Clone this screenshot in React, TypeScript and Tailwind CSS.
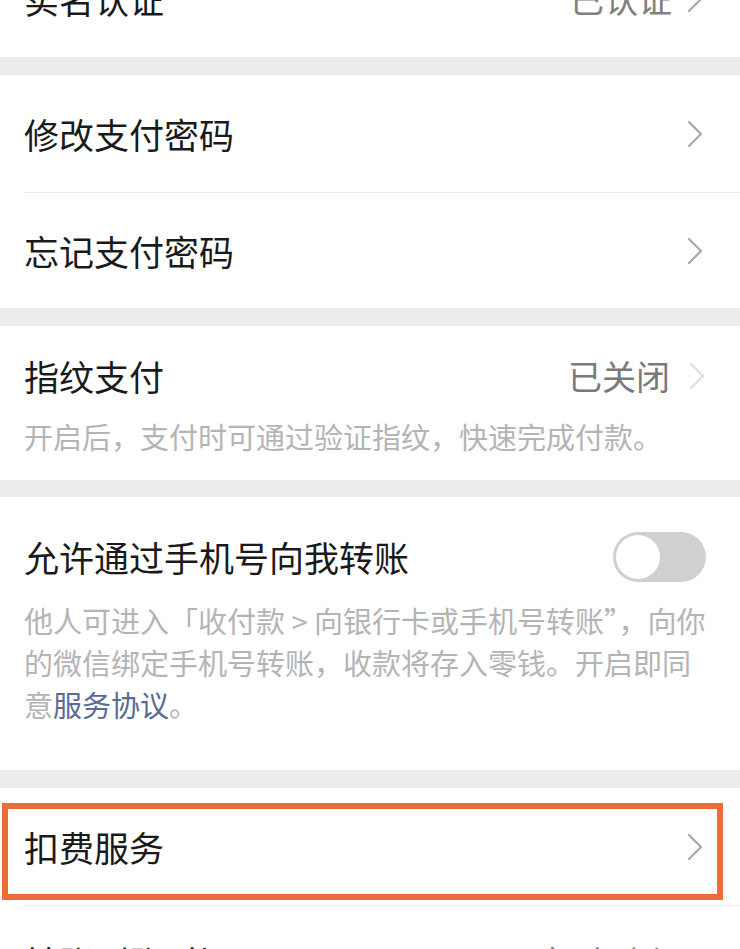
import React from 'react'

const Chevron = ({ light }: { light?: boolean }) => (
    <svg width="18" height="28" viewBox="0 0 18 28" className="shrink-0">
        <polyline
            points="3,2 15,14 3,26"
            fill="none"
            stroke={light ? '#dcdcdc' : '#a8a8a8'}
            strokeWidth="2.2"
            strokeLinecap="round"
            strokeLinejoin="round"
        />
    </svg>
)

const Gap = ({ h }: { h: string }) => <div className={`${h} bg-[#ededed]`} />

interface RowProps {
    title: string
    value?: string
}

const Row: React.FC<RowProps> = ({ title, value }) => (
    <div className="h-[117px] flex items-center justify-between pl-[24px] pr-[36px]">
        <span className="text-[35px] text-[#1a1a1a] leading-[48px]">{title}</span>
        <div className="flex items-center gap-[14px]">
            {value && <span className="text-[34px] text-[#808080] leading-[48px]">{value}</span>}
            <Chevron />
        </div>
    </div>
)

const Divider = () => <div className="ml-[24px] h-px bg-[#ececec]" />

export default function App() {
    return (
        <div className="w-[740px] h-[949px] overflow-hidden bg-white" style={{ fontFamily: '"Noto Sans CJK SC", "Noto Sans", sans-serif' }}>
            <div className="-mt-[60px]">
                <Row title="实名认证" value="已认证" />
            </div>
            <Gap h="h-[18px]" />

            <Row title="修改支付密码" />
            <Divider />
            <div className="h-[115px] flex items-center justify-between pl-[24px] pr-[36px]">
                <span className="text-[35px] text-[#1a1a1a] leading-[48px]">忘记支付密码</span>
                <Chevron />
            </div>
            <Gap h="h-[18px]" />

            <div className="h-[154px] pt-[26px] pl-[24px] pr-[34px]">
                <div className="flex items-center justify-between">
                    <span className="text-[35px] text-[#1a1a1a] leading-[48px]">指纹支付</span>
                    <div className="flex items-center gap-[18px]">
                        <span className="text-[34px] text-[#7a7a7a] leading-[48px]">已关闭</span>
                        <Chevron light />
                    </div>
                </div>
                <div className="mt-[15px] text-[29px] leading-[42px] text-[#b4b4b4] whitespace-nowrap">
                    开启后，支付时可通过验证指纹，快速完成付款。
                </div>
            </div>
            <Gap h="h-[17px]" />

            <div className="h-[273px] pt-[35px] pl-[24px] pr-[34px]">
                <div className="flex items-center justify-between">
                    <span className="text-[35px] text-[#1a1a1a] leading-[48px]">允许通过手机号向我转账</span>
                    <div className="w-[93px] h-[50px] rounded-full bg-[#d0d0d0] p-[3px] flex items-center">
                        <div className="w-[44px] h-[44px] rounded-full bg-white" />
                    </div>
                </div>
                <div className="mt-[17px] text-[29px] leading-[42px] text-[#b4b4b4] whitespace-nowrap">
                    <div>他人可进入「收付款 &gt; 向银行卡或手机号转账”，向你</div>
                    <div>的微信绑定手机号转账，收款将存入零钱。开启即同</div>
                    <div>
                        意<span className="text-[#576b95]">服务协议</span>。
                    </div>
                </div>
            </div>
            <Gap h="h-[18px]" />

            <div className="relative">
                <Row title="扣费服务" />
                <div className="absolute left-[2px] top-[15px] w-[721px] h-[97px] border-[6px] border-[#ee6c38]" />
            </div>
            <Divider />
            <div className="pt-[32px] flex items-center justify-between pl-[24px] pr-[36px]">
                <span className="text-[35px] text-[#1a1a1a] leading-[48px]">转账到账时间</span>
                <div className="flex items-center gap-[14px]">
                    <span className="text-[34px] text-[#808080] leading-[48px]">实时到账</span>
                    <Chevron />
                </div>
            </div>
        </div>
    )
}
